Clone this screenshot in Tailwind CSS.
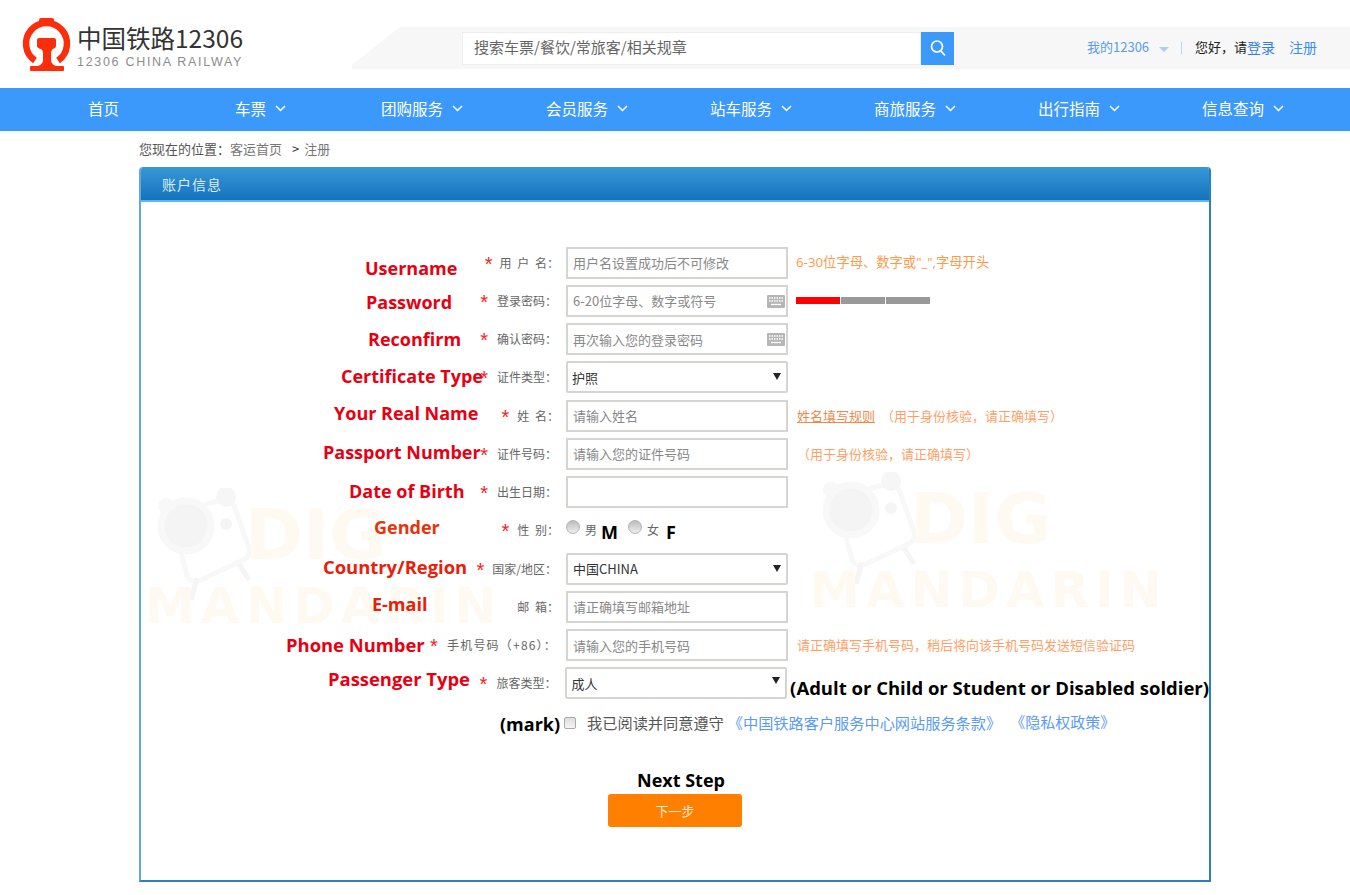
<!DOCTYPE html>
<html lang="en">
<head>
    <meta charset="UTF-8">
    <title>中国铁路12306</title>
    <script src="https://cdn.jsdelivr.net/npm/@tailwindcss/browser@4"></script>
</head>
<body class="bg-white font-['Noto_Sans_CJK_SC',sans-serif] text-[13px] text-[#666]">
    <!-- Header -->
    <header class="relative h-[88px] flex items-start">
        <svg class="absolute left-0 top-0 w-[80px] h-[80px]" viewBox="0 0 80 80">
            <path d="M35 60.500A20.500 20.500 0 1 1 58 60.500" fill="none" stroke="#fb2d0a" stroke-width="6.500"/>
            <rect x="39" y="18" width="15" height="5" rx="2" fill="#fb2d0a"/>
            <path d="M37 40q0-2 2-2h15q2 0 2 2v6q0 2-3 3q-2 1-2 5v6q0 4 5 6h7q1 0 1 1v3q0 1-1 1h-32q-1 0-1-1v-3q0-1 1-1h7q5-2 5-6v-6q0-4-2-5q-4-1-4-3z" fill="#fb2d0a"/>
        </svg>
        <div class="ml-[77px] mt-[20px] w-[275px]">
            <div class="text-[24.500px] leading-[35px] text-[#333]">中国铁路12306</div>
            <div class="font-['Liberation_Sans'] text-[12.500px] leading-[14px] tracking-[1.700px] text-[#8c8c8c]">12306 CHINA RAILWAY</div>
        </div>
        <div class="mt-[27px] w-[998px] h-[42px] bg-[#f7f7f7] [clip-path:polygon(48px_0,100%_0,100%_100%,0_100%,0_38px)] flex items-center text-[13px]">
            <div class="ml-[110px] w-[459px] h-[33px] bg-white border border-[#eeeeee] pl-[11px] pb-[2px] flex items-center text-[15px] text-[#666]">搜索车票/餐饮/常旅客/相关规章</div>
            <button class="w-[33px] h-[33px] bg-[#3b99fc] flex items-center justify-center">
                <svg class="w-[18px] h-[18px]" viewBox="0 0 18 18" fill="none" stroke="#fff" stroke-width="1.700"><circle cx="8" cy="7.500" r="5.500"/><path d="M12 12l4 4.500"/></svg>
            </button>
            <div class="ml-[133px] flex items-center pb-[2px]">
                <a class="text-[#5b9bf0]">我的12306</a>
                <span class="ml-[10px] w-0 h-0 border-x-[5px] border-x-transparent border-t-[5px] border-t-[#a9cdf5] mt-[4px]"></span>
                <span class="ml-[12px] w-px h-[12px] bg-[#b9d4f2] mt-[2px]"></span>
                <span class="ml-[13px] text-[#222]">您好，请</span><a class="text-[14px] text-[#2f80ed]">登录</a>
                <a class="ml-[14px] text-[14px] text-[#3b8ff0]">注册</a>
            </div>
        </div>
    </header>

    <!-- Nav -->
    <nav class="h-[43px] bg-[#3b99fc] pl-[88px] pb-[2px] flex items-center text-[15.500px] text-white">
        <a class="w-[147px]">首页</a>
        <a class="w-[146px] flex items-center gap-[9px]">车票<svg class="w-[11px] h-[7px]" viewBox="0 0 11 7" fill="none" stroke="#fff" stroke-width="1.500"><path d="M1 1l4.500 4.500L10 1"/></svg></a>
        <a class="w-[165px] flex items-center gap-[9px]">团购服务<svg class="w-[11px] h-[7px]" viewBox="0 0 11 7" fill="none" stroke="#fff" stroke-width="1.500"><path d="M1 1l4.500 4.500L10 1"/></svg></a>
        <a class="w-[164px] flex items-center gap-[9px]">会员服务<svg class="w-[11px] h-[7px]" viewBox="0 0 11 7" fill="none" stroke="#fff" stroke-width="1.500"><path d="M1 1l4.500 4.500L10 1"/></svg></a>
        <a class="w-[164px] flex items-center gap-[9px]">站车服务<svg class="w-[11px] h-[7px]" viewBox="0 0 11 7" fill="none" stroke="#fff" stroke-width="1.500"><path d="M1 1l4.500 4.500L10 1"/></svg></a>
        <a class="w-[164px] flex items-center gap-[9px]">商旅服务<svg class="w-[11px] h-[7px]" viewBox="0 0 11 7" fill="none" stroke="#fff" stroke-width="1.500"><path d="M1 1l4.500 4.500L10 1"/></svg></a>
        <a class="w-[164px] flex items-center gap-[9px]">出行指南<svg class="w-[11px] h-[7px]" viewBox="0 0 11 7" fill="none" stroke="#fff" stroke-width="1.500"><path d="M1 1l4.500 4.500L10 1"/></svg></a>
        <a class="flex items-center gap-[9px]">信息查询<svg class="w-[11px] h-[7px]" viewBox="0 0 11 7" fill="none" stroke="#fff" stroke-width="1.500"><path d="M1 1l4.500 4.500L10 1"/></svg></a>
    </nav>

    <main class="ml-[139px] w-[1072px]">
        <!-- Breadcrumb -->
        <div class="h-[36px] flex items-center text-[13px] text-[#777]"><span class="text-[#555]">您现在的位置：</span>客运首页<span class="ml-[10px] mr-[5px] text-[#333]">&gt;</span>注册</div>

        <!-- Panel -->
        <section class="relative h-[715px] rounded-t-[4px] border-l-2 border-r-2 border-b-2 border-[#2b80c5] border-l-[#5fa9e0] overflow-hidden">
            <div class="h-[35px] -mx-[2px] bg-gradient-to-b from-[#3798d8] to-[#1373bd] border-b-2 border-[#5bb8e8] pl-[23px] pt-[1px] flex items-center text-[14px] tracking-[1px] text-[#dcecf8]">账户信息</div>

            <!-- Watermarks -->
            <div class="absolute left-[4px] top-[321px] w-[370px] h-[150px] pointer-events-none">
                <svg class="absolute left-[6px] top-0 w-[100px] h-[120px]" viewBox="0 0 100 120" fill="none"><path d="M20 25L72 12Q80 10 84 20L98 60Q100 68 92 72L50 92Q40 96 36 88Z" fill="#fff" stroke="#f8f8f8" stroke-width="5"/><circle cx="15" cy="18" r="8" fill="#f8f8f8"/><circle cx="75" cy="9" r="10" fill="#f6f6f6"/><circle cx="35" cy="38" r="25" fill="#f4f4f4" stroke="#f8f8f8" stroke-width="7"/><circle cx="75" cy="36" r="6" fill="#f5f5f5"/><path d="M46 90L40 112M88 76L98 92" stroke="#f5f5f5" stroke-width="5"/></svg>
                <div class="absolute left-[100px] top-[12px] font-['DejaVu_Sans'] font-bold text-[70px] leading-[70px] text-[#fffaf1]">DIG</div>
                <div class="absolute left-0 top-[91px] font-['DejaVu_Sans'] font-bold text-[50px] leading-[54px] tracking-[6px] text-[#fffaf1]">MANDARIN</div>
            </div>
            <div class="absolute left-[669px] top-[305px] w-[370px] h-[150px] pointer-events-none">
                <svg class="absolute left-[6px] top-0 w-[100px] h-[120px]" viewBox="0 0 100 120" fill="none"><path d="M20 25L72 12Q80 10 84 20L98 60Q100 68 92 72L50 92Q40 96 36 88Z" fill="#fff" stroke="#f8f8f8" stroke-width="5"/><circle cx="15" cy="18" r="8" fill="#f8f8f8"/><circle cx="75" cy="9" r="10" fill="#f6f6f6"/><circle cx="35" cy="38" r="25" fill="#f4f4f4" stroke="#f8f8f8" stroke-width="7"/><circle cx="75" cy="36" r="6" fill="#f5f5f5"/><path d="M46 90L40 112M88 76L98 92" stroke="#f5f5f5" stroke-width="5"/></svg>
                <div class="absolute left-[100px] top-[12px] font-['DejaVu_Sans'] font-bold text-[70px] leading-[70px] text-[#fffaf1]">DIG</div>
                <div class="absolute left-0 top-[91px] font-['DejaVu_Sans'] font-bold text-[50px] leading-[54px] tracking-[6px] text-[#fffaf1]">MANDARIN</div>
            </div>

            <form class="relative pt-[44.500px] flex flex-col gap-[6.270px]">
                <!-- Username -->
                <div class="relative h-[32px] flex items-center">
                    <span class="absolute left-[224px] top-[9px] font-['Open_Sans'] font-bold text-[18px] leading-6 text-[#e60012]">Username</span>
                    <label class="w-[425px] pr-[7px] text-right text-[12px] [word-spacing:3px]"><i class="inline-block not-italic font-['Liberation_Sans'] text-[20px] leading-[12px] translate-y-[3px] text-[#ff2020] mr-[7px]">*</i>用 户 名：</label>
                    <input class="w-[222px] h-full border-2 border-[#d4d4d0] px-[5px] bg-transparent placeholder:text-[#888]" placeholder="用户名设置成功后不可修改">
                    <span class="ml-[8px] font-['Open_Sans','Noto_Sans_CJK_SC',sans-serif] text-[13.300px] text-[#ff9a4d]">6-30位字母、数字或"_",字母开头</span>
                </div>
                <!-- Password -->
                <div class="relative h-[32px] flex items-center">
                    <span class="absolute left-[225px] top-[5px] font-['Open_Sans'] font-bold text-[18px] leading-6 text-[#e60012]">Password</span>
                    <label class="w-[425px] pr-[9px] text-right text-[12px]"><i class="inline-block not-italic font-['Liberation_Sans'] text-[20px] leading-[12px] translate-y-[3px] text-[#ff2020] mr-[9px]">*</i>登录密码：</label>
                    <div class="relative w-[222px] h-full">
                        <input class="w-full h-full border-2 border-[#d4d4d0] px-[5px] bg-transparent placeholder:text-[#888]" placeholder="6-20位字母、数字或符号">
                        <svg class="absolute right-[3px] top-[10px] w-[18px] h-[13px]" viewBox="0 0 18 13"><rect width="18" height="13" rx="1" fill="#b5b5b5"/><path d="M2 3h14M2 6h14" stroke="#fff" stroke-width="1.300" stroke-dasharray="1.500 1"/><path d="M4 9.500h10" stroke="#fff" stroke-width="1.300"/></svg>
                    </div>
                    <div class="ml-[8px] flex gap-[1px]">
                        <span class="w-[44px] h-[7px] bg-[#ff0000]"></span>
                        <span class="w-[44px] h-[7px] bg-[#999]"></span>
                        <span class="w-[44px] h-[7px] bg-[#999]"></span>
                    </div>
                </div>
                <!-- Reconfirm -->
                <div class="relative h-[32px] flex items-center">
                    <span class="absolute left-[227px] top-[4px] font-['Open_Sans'] font-bold text-[18px] leading-6 text-[#e60012]">Reconfirm</span>
                    <label class="w-[425px] pr-[9px] text-right text-[12px]"><i class="inline-block not-italic font-['Liberation_Sans'] text-[20px] leading-[12px] translate-y-[3px] text-[#ff2020] mr-[9px]">*</i>确认密码：</label>
                    <div class="relative w-[222px] h-full">
                        <input class="w-full h-full border-2 border-[#d4d4d0] px-[5px] bg-transparent placeholder:text-[#888]" placeholder="再次输入您的登录密码">
                        <svg class="absolute right-[3px] top-[10px] w-[18px] h-[13px]" viewBox="0 0 18 13"><rect width="18" height="13" rx="1" fill="#b5b5b5"/><path d="M2 3h14M2 6h14" stroke="#fff" stroke-width="1.300" stroke-dasharray="1.500 1"/><path d="M4 9.500h10" stroke="#fff" stroke-width="1.300"/></svg>
                    </div>
                </div>
                <!-- Certificate type -->
                <div class="relative h-[32px] flex items-center">
                    <span class="absolute left-[200px] top-[3px] font-['Open_Sans'] font-bold text-[18px] leading-6 text-[#e60012]">Certificate Type</span>
                    <label class="w-[425px] pr-[9px] text-right text-[12px]"><i class="inline-block not-italic font-['Liberation_Sans'] text-[20px] leading-[12px] translate-y-[3px] text-[#ff2020] mr-[9px]">*</i>证件类型：</label>
                    <div class="relative w-[222px] h-full">
                        <select class="w-full h-full appearance-none border-2 border-[#d4d4d0] rounded-[2px] pl-[4px] bg-white text-[#333]"><option>护照</option></select>
                        <span class="absolute right-[7px] top-[12px] w-0 h-0 border-x-[4px] border-x-transparent border-t-[7px] border-t-[#222]"></span>
                    </div>
                </div>
                <!-- Real name -->
                <div class="relative h-[32px] flex items-center">
                    <span class="absolute left-[193px] top-[1px] font-['Open_Sans'] font-bold text-[18px] leading-6 text-[#e60012]">Your Real Name</span>
                    <label class="w-[425px] pr-[7px] text-right text-[12px] [word-spacing:3px]"><i class="inline-block not-italic font-['Liberation_Sans'] text-[20px] leading-[12px] translate-y-[3px] text-[#ff2020] mr-[8px]">*</i>姓 名：</label>
                    <input class="w-[222px] h-full border-2 border-[#d4d4d0] px-[5px] bg-transparent placeholder:text-[#888]" placeholder="请输入姓名">
                    <a class="ml-[9px] underline text-[#f08a4a]">姓名填写规则</a>
                    <span class="ml-[6px] text-[#ff9f66]">（用于身份核验，请正确填写）</span>
                </div>
                <!-- Passport number -->
                <div class="relative h-[32px] flex items-center">
                    <span class="absolute left-[182px] top-[2px] font-['Open_Sans'] font-bold text-[18px] leading-6 text-[#e60012]">Passport Number</span>
                    <label class="w-[425px] pr-[9px] text-right text-[12px]"><i class="inline-block not-italic font-['Liberation_Sans'] text-[20px] leading-[12px] translate-y-[3px] text-[#ff2020] mr-[9px]">*</i>证件号码：</label>
                    <input class="w-[222px] h-full border-2 border-[#d4d4d0] px-[5px] bg-transparent placeholder:text-[#888]" placeholder="请输入您的证件号码">
                    <span class="ml-[9px] text-[#ff9f66]">（用于身份核验，请正确填写）</span>
                </div>
                <!-- Date of birth -->
                <div class="relative h-[32px] flex items-center">
                    <span class="absolute left-[208px] top-[3px] font-['Open_Sans'] font-bold text-[18px] leading-6 text-[#e60012]">Date of Birth</span>
                    <label class="w-[425px] pr-[9px] text-right text-[12px]"><i class="inline-block not-italic font-['Liberation_Sans'] text-[20px] leading-[12px] translate-y-[3px] text-[#ff2020] mr-[9px]">*</i>出生日期：</label>
                    <input class="w-[222px] h-full border-2 border-[#d4d4d0] px-[5px] bg-transparent">
                </div>
                <!-- Gender -->
                <div class="relative h-[32px] flex items-center">
                    <span class="absolute left-[233px] top-[1px] font-['Open_Sans'] font-bold text-[18px] leading-6 text-[#e8320a]">Gender</span>
                    <label class="w-[425px] pr-[7px] text-right text-[12px] [word-spacing:3px]"><i class="inline-block not-italic font-['Liberation_Sans'] text-[20px] leading-[12px] translate-y-[3px] text-[#ff2020] mr-[8px]">*</i>性 别：</label>
                    <div class="flex items-center">
                        <input type="radio" name="gender" class="appearance-none w-[14px] h-[14px] -translate-y-[3px] rounded-full border border-[#b5b5b5] bg-gradient-to-b from-[#bbb] to-[#eee]">
                        <span class="ml-[5px] text-[12px]">男</span>
                        <b class="ml-[4px] font-['Open_Sans'] text-[18px] text-black translate-y-[2px]">M</b>
                        <input type="radio" name="gender" class="ml-[10px] appearance-none w-[14px] h-[14px] -translate-y-[3px] rounded-full border border-[#b5b5b5] bg-gradient-to-b from-[#bbb] to-[#eee]">
                        <span class="ml-[5px] text-[12px]">女</span>
                        <b class="ml-[7px] font-['Open_Sans'] text-[18px] text-black translate-y-[2px]">F</b>
                    </div>
                </div>
                <!-- Country -->
                <div class="relative h-[32px] flex items-center">
                    <span class="absolute left-[182px] top-[2px] font-['Open_Sans'] font-bold text-[18.400px] leading-6 text-[#e8200a]">Country/Region</span>
                    <label class="w-[425px] pr-[9px] text-right text-[12px]"><i class="inline-block not-italic font-['Liberation_Sans'] text-[20px] leading-[12px] translate-y-[3px] text-[#ff2020] mr-[8px]">*</i>国家/地区：</label>
                    <div class="relative w-[222px] h-full">
                        <select class="w-full h-full appearance-none border-2 border-[#d4d4d0] rounded-[2px] pl-[5px] bg-white text-[#333]"><option>中国CHINA</option></select>
                        <span class="absolute right-[7px] top-[12px] w-0 h-0 border-x-[4px] border-x-transparent border-t-[7px] border-t-[#222]"></span>
                    </div>
                </div>
                <!-- Email -->
                <div class="relative h-[32px] flex items-center">
                    <span class="absolute left-[231px] top-[1px] font-['Open_Sans'] font-bold text-[18px] leading-6 text-[#e8200a]">E-mail</span>
                    <label class="w-[425px] pr-[7px] text-right text-[12px] [word-spacing:3px]">邮 箱：</label>
                    <input class="w-[222px] h-full border-2 border-[#d4d4d0] px-[5px] bg-transparent placeholder:text-[#888]" placeholder="请正确填写邮箱地址">
                </div>
                <!-- Phone -->
                <div class="relative h-[32px] flex items-center">
                    <span class="absolute left-[145px] top-[4px] font-['Open_Sans'] font-bold text-[18.400px] leading-6 text-[#e60012]">Phone Number</span>
                    <label class="w-[425px] pr-[9px] text-right text-[12px] tracking-[1.200px]"><i class="inline-block not-italic font-['Liberation_Sans'] text-[20px] leading-[12px] translate-y-[3px] text-[#ff2020] mr-[8px]">*</i>手机号码（+86）：</label>
                    <input class="w-[222px] h-full border-2 border-[#d4d4d0] px-[5px] bg-transparent placeholder:text-[#888]" placeholder="请输入您的手机号码">
                    <span class="ml-[9px] text-[13px] text-[#ff9f66]">请正确填写手机号码，稍后将向该手机号码发送短信验证码</span>
                </div>
                <!-- Passenger type -->
                <div class="relative h-[32px] flex items-center">
                    <span class="absolute left-[187px] top-[0px] font-['Open_Sans'] font-bold text-[18.400px] leading-6 text-[#e60012]">Passenger Type</span>
                    <label class="w-[425px] pr-[9px] text-right text-[12px]"><i class="inline-block not-italic font-['Liberation_Sans'] text-[20px] leading-[12px] translate-y-[3px] text-[#ff2020] mr-[9px]">*</i>旅客类型：</label>
                    <div class="relative w-[222px] h-full">
                        <select class="w-full h-full appearance-none border-2 border-[#d4d4d0] rounded-[2px] pl-[4px] bg-white text-[#333]"><option>成人</option></select>
                        <span class="absolute right-[7px] top-[10px] w-0 h-0 border-x-[4px] border-x-transparent border-t-[7px] border-t-[#222]"></span>
                    </div>
                    <b class="ml-[3px] whitespace-nowrap font-['Open_Sans'] text-[18.500px] text-black translate-y-[4px]">(Adult or Child or Student or Disabled soldier)</b>
                </div>

                <!-- Agreement -->
                <div class="mt-[2px] h-[30px] pl-[359px] flex items-center whitespace-nowrap">
                    <b class="font-['Open_Sans'] text-[18px] text-black translate-y-[2px]">(mark)</b>
                    <input type="checkbox" class="ml-[4px] appearance-none w-[12px] h-[12px] rounded-[2px] border border-[#aaa] bg-gradient-to-b from-[#ddd] to-[#f5f5f5]">
                    <span class="ml-[11px] text-[15.200px] text-[#555]">我已阅读并同意遵守</span>
                    <a class="ml-[4px] text-[15.200px] text-[#5b9bf0]">《中国铁路客户服务中心网站服务条款》</a>
                    <a class="ml-[9px] text-[15px] text-[#5b9bf0]">《隐私权政策》</a>
                </div>

                <!-- Next step -->
                <div class="mt-[24px] flex flex-col items-center w-[1068px]">
                    <b class="ml-[12px] font-['Open_Sans'] text-[18px] leading-6 text-black">Next Step</b>
                    <button type="button" class="mt-[2px] w-[134px] h-[33px] rounded-[3px] bg-[#ff8000] text-[13px] text-[#ffe9d0]">下一步</button>
                </div>
            </form>
        </section>
    </main>
</body>
</html>
